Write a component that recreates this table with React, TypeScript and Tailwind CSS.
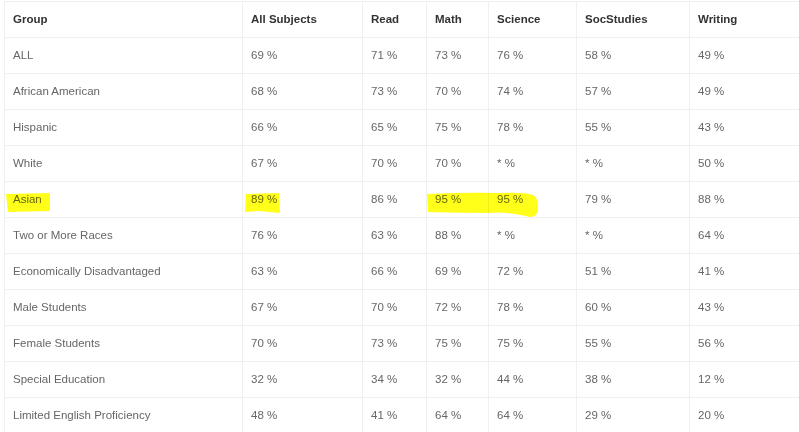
import React from "react";

const cols = ["Group", "All Subjects", "Read", "Math", "Science", "SocStudies", "Writing"];
const widths = ["w-[238px]", "w-[120px]", "w-[64px]", "w-[62px]", "w-[88px]", "w-[113px]", "w-[115px]"];

const rows: string[][] = [
  ["ALL", "69 %", "71 %", "73 %", "76 %", "58 %", "49 %"],
  ["African American", "68 %", "73 %", "70 %", "74 %", "57 %", "49 %"],
  ["Hispanic", "66 %", "65 %", "75 %", "78 %", "55 %", "43 %"],
  ["White", "67 %", "70 %", "70 %", "* %", "* %", "50 %"],
  ["Asian", "89 %", "86 %", "95 %", "95 %", "79 %", "88 %"],
  ["Two or More Races", "76 %", "63 %", "88 %", "* %", "* %", "64 %"],
  ["Economically Disadvantaged", "63 %", "66 %", "69 %", "72 %", "51 %", "41 %"],
  ["Male Students", "67 %", "70 %", "72 %", "78 %", "60 %", "43 %"],
  ["Female Students", "70 %", "73 %", "75 %", "75 %", "55 %", "56 %"],
  ["Special Education", "32 %", "34 %", "32 %", "44 %", "38 %", "12 %"],
  ["Limited English Proficiency", "48 %", "41 %", "64 %", "64 %", "29 %", "20 %"],
];

// yellow marker strokes over the Asian row
function Highlights() {
  return (
    <svg
      className="pointer-events-none absolute left-0 top-0 mix-blend-multiply"
      width="799"
      height="432"
    >
      <path d="M6 194 L50 193 L50 211 L8 212 Z" fill="#ffff1a" />
      <path d="M246 194 L279 193 L280 213 L259 211 L245 212 Z" fill="#ffff1a" />
      <path
        d="M427 194 Q470 192 500 193 Q524 192 533 195 Q538 198 538 206 Q538 218 530 217 Q505 211 490 213 Q460 213 428 212 Z"
        fill="#ffff1a"
      />
    </svg>
  );
}

export default function App() {
  return (
    <div className="relative h-[432px] w-[799px] overflow-hidden bg-white pl-[4px] pt-[1px] font-['Liberation_Sans',Arial,sans-serif] text-[11.5px]">
      <table className="w-[800px] table-fixed border-collapse">
        <thead>
          <tr className="h-[36px]">
            {cols.map((c, i) => (
              <th
                key={c}
                className={`${widths[i]} border border-[#f0f0f0] px-[8px] text-left font-bold text-[#333]`}
              >
                {c}
              </th>
            ))}
          </tr>
        </thead>
        <tbody>
          {rows.map((r) => (
            <tr key={r[0]} className="h-[36px]">
              {r.map((v, i) => (
                <td key={i} className="border border-[#f0f0f0] px-[8px] text-[#666]">
                  {v}
                </td>
              ))}
            </tr>
          ))}
        </tbody>
      </table>
      <Highlights />
    </div>
  );
}
